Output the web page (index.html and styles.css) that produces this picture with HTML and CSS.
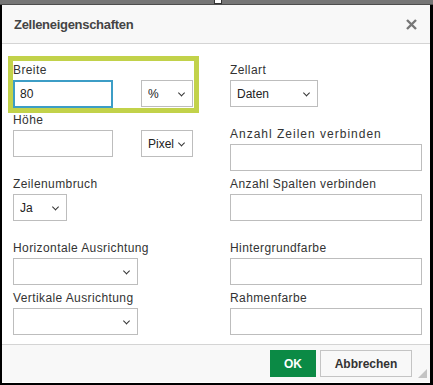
FILE: index.html
```html
<!DOCTYPE html>
<html lang="de">
<head>
    <meta charset="UTF-8">
    <meta name="viewport" content="width=device-width, initial-scale=1.0">
    <title>Zelleneigenschaften</title>
    <link rel="stylesheet" href="styles.css">
</head>
<body>
    <div class="topbar"><span class="handle"></span></div>
    <div class="dialog">
        <div class="dialog-head">
            <span class="dialog-title">Zelleneigenschaften</span>
            <svg class="close" width="11" height="11" viewBox="0 0 11 11">
                <path d="M1 1 L10 10 M10 1 L1 10" stroke="#777" stroke-width="2.4" fill="none"/>
            </svg>
        </div>
        <div class="dialog-body">
            <div class="col col-left">
                <div class="size-box">
                    <label class="lbl">Breite</label>
                    <div class="pair">
                        <input type="text" class="txt w-size focus" value="80">
                        <div class="sel w-unit"><select><option>%</option></select></div>
                    </div>
                </div>
                <div class="field indent tight">
                    <label class="lbl">Höhe</label>
                    <div class="pair">
                        <input type="text" class="txt w-size">
                        <div class="sel w-unit"><select><option>Pixel</option></select></div>
                    </div>
                </div>
                <div class="field indent spaced">
                    <label class="lbl">Zeilenumbruch</label>
                    <div class="sel w-short"><select><option>Ja</option></select></div>
                </div>
                <div class="field indent spaced">
                    <label class="lbl">Horizontale Ausrichtung</label>
                    <div class="sel w-mid"><select><option></option></select></div>
                </div>
                <div class="field indent">
                    <label class="lbl">Vertikale Ausrichtung</label>
                    <div class="sel w-mid"><select><option></option></select></div>
                </div>
            </div>
            <div class="col col-right">
                <div class="field first">
                    <label class="lbl">Zellart</label>
                    <div class="sel w-type"><select><option>Daten</option></select></div>
                </div>
                <div class="field spaced">
                    <label class="lbl lbl-wide">Anzahl Zeilen verbinden</label>
                    <input type="text" class="txt w-full">
                </div>
                <div class="field">
                    <label class="lbl">Anzahl Spalten verbinden</label>
                    <input type="text" class="txt w-full">
                </div>
                <div class="field spaced">
                    <label class="lbl">Hintergrundfarbe</label>
                    <input type="text" class="txt w-full">
                </div>
                <div class="field">
                    <label class="lbl">Rahmenfarbe</label>
                    <input type="text" class="txt w-full">
                </div>
            </div>
        </div>
        <div class="dialog-foot">
            <button class="btn btn-ok">OK</button>
            <button class="btn btn-cancel">Abbrechen</button>
            <svg class="grip" width="9" height="9" viewBox="0 0 9 9">
                <path d="M9 0 L9 9 L0 9 Z" fill="#c4c4c4"/>
            </svg>
        </div>
    </div>
</body>
</html>
```

FILE: styles.css
```css
body {
    margin: 0;
    width: 433px;
    height: 385px;
    overflow: hidden;
    background-color: #000;
    font-family: "Liberation Sans", Arial, sans-serif;
    font-size: 12px;
    color: #222;
}
.topbar {
    position: relative;
    height: 4px;
    background-color: #767676;
    border-bottom: 1px solid #4d4d4d;
}
.handle {
    position: absolute;
    left: 214px;
    top: 0;
    width: 6px;
    height: 3px;
    background-color: #fff;
    border: 1px solid #333;
    border-top: none;
}
.dialog {
    margin: 0 3px 0 2px;
    height: 378px;
    background-color: #fff;
}
.dialog-head {
    display: flex;
    align-items: center;
    justify-content: space-between;
    height: 39px;
    padding: 1px 13px 0 12px;
    box-sizing: border-box;
    background-color: #f8f8f8;
    border-bottom: 1px solid #d4d4d4;
}
.dialog-title {
    font-size: 13px;
    font-weight: bold;
    letter-spacing: -0.3px;
    color: #444;
}
.dialog-body {
    display: flex;
    gap: 31px;
    height: 300px;
    padding: 12px 0 0 6px;
    box-sizing: border-box;
}
.col {
    display: flex;
    flex-direction: column;
}
.col-left {
    width: 191px;
}
.col-right {
    width: 192px;
}
.lbl {
    display: block;
    line-height: 15px;
    letter-spacing: 0.4px;
    color: #333;
    margin-bottom: 2px;
}
.lbl-wide {
    letter-spacing: 1px;
}
.size-box {
    border: 5px solid #c2d24a;
    padding: 2px 0 0 0;
}
.pair {
    display: flex;
    justify-content: space-between;
    padding-right: 1px;
}
.field {
    margin-top: 6px;
}
.field.tight {
    margin-top: 0;
}
.field.spaced {
    margin-top: 20px;
}
.field.first {
    margin-top: 7px;
}
.indent {
    margin-left: 5px;
    margin-right: 5px;
}
.txt {
    height: 27px;
    box-sizing: border-box;
    border: 1px solid #bdbdbd;
    padding: 0 6px;
    font-family: inherit;
    font-size: 12px;
    color: #222;
    outline: none;
    border-radius: 0;
}
.txt.focus {
    height: 28px;
    border: 2px solid #3c9dc6;
    padding-left: 5px;
}
.sel {
    position: relative;
    height: 27px;
}
.sel::after {
    content: "";
    position: absolute;
    right: 9px;
    top: 50%;
    width: 4px;
    height: 4px;
    border-right: 1.5px solid #333;
    border-bottom: 1.5px solid #333;
    transform: translateY(-70%) rotate(45deg);
    pointer-events: none;
}
.sel select {
    appearance: none;
    -webkit-appearance: none;
    width: 100%;
    height: 100%;
    border: 1px solid #bdbdbd;
    border-radius: 0;
    background-color: #fff;
    padding: 0 0 0 6px;
    font-family: inherit;
    font-size: 12px;
    color: #222;
    outline: none;
}
.w-size {
    width: 100px;
}
.w-unit {
    width: 52px;
}
.w-short {
    width: 54px;
}
.w-mid {
    width: 125px;
}
.w-type {
    width: 88px;
}
.w-full {
    width: 192px;
}
.dialog-foot {
    position: relative;
    display: flex;
    justify-content: flex-end;
    gap: 4px;
    height: 38px;
    padding: 5px 18px 0 0;
    box-sizing: border-box;
    background-color: #f8f8f8;
    border-top: 1px solid #d4d4d4;
}
.btn {
    height: 27px;
    font-family: inherit;
    font-size: 12px;
    font-weight: bold;
    border-radius: 0;
    cursor: pointer;
}
.btn-ok {
    width: 46px;
    background-color: #0b8a45;
    color: #fff;
    border: none;
}
.btn-cancel {
    width: 92px;
    background-color: #f8f8f8;
    color: #333;
    border: 1px solid #c4c4c4;
}
.grip {
    position: absolute;
    right: 3px;
    bottom: 4px;
}
```
